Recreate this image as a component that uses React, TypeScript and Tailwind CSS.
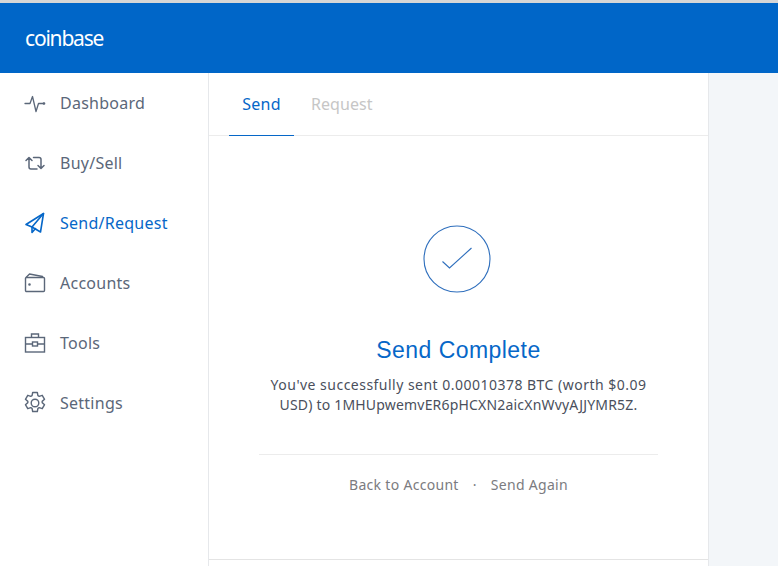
import type { ReactNode } from 'react';

const font = { fontFamily: '"Noto Sans", "Open Sans", sans-serif' };

function PulseIcon() {
  return (
    <svg width="22" height="20" viewBox="0 0 22 20" fill="none" stroke="currentColor" strokeWidth="1.3" strokeLinejoin="round" strokeLinecap="round">
      <path d="M1 10.500h5l2.500-7 3.500 15 2.500-8h5.500" />
      <circle cx="20" cy="10.500" r=".7" fill="currentColor" />
    </svg>
  );
}

function RetweetIcon() {
  return (
    <svg width="22" height="20" viewBox="0 0 22 20" fill="none" stroke="currentColor" strokeWidth="1.5" strokeLinejoin="round" strokeLinecap="round">
      <path d="M2 7.500 5 4.500l3 3M5 5v9a2 2 0 0 0 2 2h6" />
      <path d="M20 12.500l-3 3-3-3M17 15V6.500a2 2 0 0 0-2-2H9.500" />
    </svg>
  );
}

function PlaneIcon() {
  return (
    <svg width="22" height="22" viewBox="0 0 22 22" fill="none" stroke="currentColor" strokeWidth="1.6" strokeLinejoin="round" strokeLinecap="round">
      <path d="M19.500 1.500 2 12.500l6 2.500 8.500 5z" />
      <path d="M19.500 1.500 8 15v5.500l3.500-4" />
    </svg>
  );
}

function WalletIcon() {
  return (
    <svg width="22" height="20" viewBox="0 0 22 20" fill="none" stroke="currentColor" strokeWidth="1.4" strokeLinejoin="round">
      <rect x="1.500" y="4.500" width="19" height="14" rx="1" />
      <path d="M2 4.500 5.500 1l13 2.500v1" />
      <circle cx="5.500" cy="11.500" r=".6" fill="currentColor" />
    </svg>
  );
}

function BriefcaseIcon() {
  return (
    <svg width="22" height="20" viewBox="0 0 22 20" fill="none" stroke="currentColor" strokeWidth="1.4">
      <rect x="1.500" y="4.500" width="19" height="14.500" />
      <path d="M7.500 4.500V1h7v3.500M1.500 11h6.500M14 11h6.500" />
      <rect x="8.500" y="9" width="5" height="4" />
    </svg>
  );
}

function GearIcon() {
  return (
    <svg width="24" height="24" viewBox="0 0 24 24" fill="none" stroke="currentColor" strokeWidth="1.4" strokeLinejoin="round" strokeLinecap="round" className="shrink-0">
      <path d="M9.670 1.500h4.660l.6 3.100 1.300.75 3-1.050 2.330 4.040-2.400 2.060v1.200l2.400 2.060-2.330 4.040-3-1.050-1.300.75-.6 3.100H9.670l-.6-3.100-1.300-.75-3 1.050-2.330-4.040 2.400-2.060v-1.200L2.440 8.340l2.330-4.040 3 1.050 1.300-.75z" />
      <circle cx="12" cy="12" r="3.800" />
    </svg>
  );
}

function NavItem({ icon, label, active }: { icon: ReactNode; label: string; active?: boolean }) {
  return (
    <div className={`h-[60px] flex items-center pl-[24px] ${active ? 'text-[#0667c8]' : 'text-[#5b6779]'}`}>
      <div className="w-[22px] flex justify-center shrink-0">{icon}</div>
      <span className="ml-[14px] text-[16px] tracking-[0.25px]">{label}</span>
    </div>
  );
}

export default function App() {
  return (
    <div className="w-[778px] h-[566px] overflow-hidden flex flex-col bg-white" style={font}>
      <div className="h-[3px] bg-[#d6d6d6] shrink-0" />
      <header className="h-[70px] shrink-0 bg-[#0066c8] flex items-center pl-[25px]">
        <span className="text-white text-[21px] tracking-[-1.2px] leading-none">coinbase</span>
      </header>
      <div className="flex flex-1 min-h-0">
        <nav className="w-[209px] shrink-0 border-r border-[#e6e8eb]">
          <NavItem icon={<PulseIcon />} label="Dashboard" />
          <NavItem icon={<RetweetIcon />} label="Buy/Sell" />
          <NavItem icon={<PlaneIcon />} label="Send/Request" active />
          <NavItem icon={<WalletIcon />} label="Accounts" />
          <NavItem icon={<BriefcaseIcon />} label="Tools" />
          <NavItem icon={<GearIcon />} label="Settings" />
        </nav>
        <main className="w-[500px] shrink-0 border-r border-[#e6e8eb] flex flex-col">
          <div className="h-[63px] shrink-0 border-b border-[#ececec] flex pl-[20px]">
            <div className="w-[65px] h-[63px] border-b border-[#0667c8] flex items-center justify-center text-[#0667c8] text-[16px] tracking-[0.3px]">
              Send
            </div>
            <div className="ml-[17px] h-[62px] flex items-center text-[#c6c6c6] text-[16px] tracking-[0.05px]">
              Request
            </div>
          </div>
          <div className="flex-1 flex flex-col items-center pt-[89px]">
            <svg className="-ml-[3px]" width="68" height="68" viewBox="0 0 68 68" fill="none" stroke="#2f6fbd" strokeWidth="1.100">
              <circle cx="34" cy="34" r="33" />
              <path d="M19.500 36.500 26.500 43 48.500 23" />
            </svg>
            <h1 className="mt-[41px] text-[#0667c8] text-[23px] tracking-[0.45px] leading-[32px]" style={{ fontFamily: '"Liberation Sans", sans-serif' }}>
              Send Complete
            </h1>
            <p className="mt-[9px] w-[400px] text-center text-[#4a4f5c] text-[14px] leading-[20px]">
              <span className="block tracking-[0.48px]">You've successfully sent 0.00010378 BTC (worth $0.09</span>
              <span className="block tracking-[0.19px]">USD) to 1MHUpwemvER6pHCXN2aicXnWvyAJJYMR5Z.</span>
            </p>
            <div className="mt-[39px] w-[399px] border-t border-[#ececec] flex justify-center items-center pt-[20px] text-[#7b7b80] text-[14px] leading-[20px] tracking-[0.3px]">
              <span>Back to Account</span>
              <span className="mx-[14px]">·</span>
              <span>Send Again</span>
            </div>
          </div>
          <div className="h-[7px] shrink-0 border-t border-[#e4e4e4]" />
        </main>
        <aside className="flex-1 bg-[#f3f6f9]" />
      </div>
    </div>
  );
}
